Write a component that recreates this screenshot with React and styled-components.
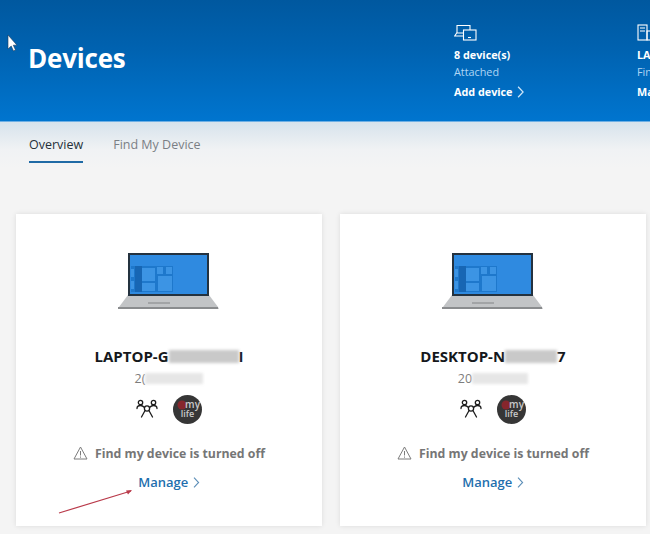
import React from "react";
import styled, { createGlobalStyle } from "styled-components";

const Global = createGlobalStyle`
  html, body { margin: 0; padding: 0; background: #f4f4f4; }
  body { font-family: "Open Sans", "Noto Sans", "Liberation Sans", sans-serif; }
`;

const Page = styled.div`
  position: relative;
  width: 650px;
  height: 534px;
  overflow: hidden;
  background: #f4f4f4;
`;

const Hero = styled.header`
  height: 122px;
  box-sizing: border-box;
  display: flex;
  background: linear-gradient(180deg, #00589f 0%, #0062b0 40%, #0075cf 100%);
  color: #fff;
  border-bottom: 1px solid #6fb0e4;
`;

const Title = styled.h1`
  margin: 0;
  width: 454px;
  flex: none;
  box-sizing: border-box;
  padding: 39px 0 0 28px;
  font-size: 26px;
  line-height: 38px;
  font-weight: 700;
  letter-spacing: -0.2px;
`;

const Stat = styled.div`
  width: 183px;
  flex: none;
  box-sizing: border-box;
  padding-top: 24px;
  white-space: nowrap;
`;

const StatValue = styled.div`
  margin-top: 6px;
  font-size: 10.8px;
  line-height: 16px;
  font-weight: 700;
`;

const StatLabel = styled.div`
  margin-top: 1px;
  font-size: 10.8px;
  line-height: 16px;
  color: #b0d6f4;
`;

const StatLink = styled.div`
  margin-top: 4px;
  font-size: 10.8px;
  line-height: 16px;
  font-weight: 700;
  display: flex;
  align-items: center;
  gap: 4px;
`;

const Tabs = styled.nav`
  height: 92px;
  box-sizing: border-box;
  padding: 12px 0 0 29px;
  display: flex;
  gap: 30px;
  background: linear-gradient(180deg, #d7e3ec 0%, #f0f2f4 30%, #f4f4f4 50%);
`;

const Tab = styled.div`
  height: 29px;
  box-sizing: border-box;
  font-size: 12.5px;
  line-height: 21px;
  color: ${(p) => (p.$active ? "#26303a" : "#7b7f85")};
  border-bottom: ${(p) => (p.$active ? "2px solid #1f6aa5" : "none")};
`;

const Cards = styled.main`
  display: flex;
  gap: 18px;
  padding-left: 16px;
`;

const Card = styled.section`
  width: 306px;
  height: 312px;
  flex: none;
  box-sizing: border-box;
  background: #fff;
  box-shadow: 0 0 5px rgba(0, 0, 0, 0.1);
  display: flex;
  flex-direction: column;
  align-items: center;
  padding-top: 38px;
`;

const DeviceName = styled.div`
  margin-top: 36px;
  height: 20px;
  display: flex;
  align-items: center;
  font-size: 15px;
  line-height: 20px;
  font-weight: 700;
  color: #15181c;
`;

const Redacted = styled.span`
  display: inline-block;
  width: ${(p) => p.$w}px;
  height: ${(p) => p.$h}px;
  background: ${(p) => p.$c};
  filter: blur(1.5px);
`;

const Serial = styled.div`
  margin-top: 3px;
  height: 18px;
  display: flex;
  align-items: center;
  font-size: 12.5px;
  color: #7d7d7d;
`;

const Owners = styled.div`
  margin-top: 7px;
  height: 30px;
  display: flex;
  align-items: center;
  gap: 15px;
`;

const Warning = styled.div`
  margin-top: 20px;
  height: 18px;
  display: flex;
  align-items: center;
  gap: 7px;
  font-size: 12.3px;
  font-weight: 700;
  color: #767676;
  white-space: nowrap;
`;

const Manage = styled.div`
  margin-top: 11px;
  display: flex;
  align-items: center;
  gap: 5px;
  font-size: 13px;
  line-height: 18px;
  font-weight: 600;
  color: #1f6fae;
`;

const Overlay = styled.svg`
  position: absolute;
  left: 0;
  top: 0;
  pointer-events: none;
`;

const Laptop = () => (
  <svg width="102" height="58" viewBox="0 0 102 58">
    <path d="M0 57 L1 55 L10 43 H91 L100 55 L101 57 Z" fill="#c2c4c6" />
    <rect x="0" y="55" width="100" height="2" fill="#8a8c8e" />
    <rect x="30" y="50" width="22" height="2" fill="#a2a4a6" />
    <rect x="10" y="1" width="81" height="43" fill="#24323f" />
    <rect x="12" y="3" width="77" height="39" fill="#2f8ae0" />
    <rect x="13" y="14" width="42" height="26" fill="#1e78cc" />
    <rect x="17" y="14" width="7" height="26" fill="#1766b4" />
    <g fill="#3c94e4">
      <rect x="13" y="17" width="3" height="8" />
      <rect x="13" y="29" width="3" height="8" />
      <rect x="24" y="16" width="13" height="13" />
      <rect x="24" y="31" width="13" height="8" />
      <rect x="39" y="15" width="6" height="7" />
      <rect x="48" y="15" width="6" height="7" />
      <rect x="40" y="24" width="14" height="15" />
    </g>
  </svg>
);

const Family = () => (
  <svg width="22" height="20" viewBox="0 0 22 20" fill="none" stroke="#1c1c1c" strokeWidth="1.3" strokeLinecap="round">
    <circle cx="4.500" cy="3.500" r="2.200" />
    <circle cx="17.500" cy="3.500" r="2.200" />
    <circle cx="11" cy="9.500" r="2.600" />
    <path d="M1 9.500c0-1.800 1.500-3 3.500-3 1.500 0 2.800.8 4 2" />
    <path d="M21 9.500c0-1.800-1.500-3-3.500-3-1.500 0-2.800.8-4 2" />
    <path d="M8.800 12 5.500 18M13.200 12l3.300 6" />
  </svg>
);

const Avatar = () => (
  <svg width="29" height="29" viewBox="0 0 29 29" fontFamily="'Open Sans', sans-serif" fontWeight="600" fill="#c9c9c9">
    <circle cx="14.500" cy="14.500" r="14.500" fill="#363636" />
    <circle cx="9" cy="10" r="4.500" fill="#86262c" />
    <text x="27" y="13" fontSize="10" textAnchor="end">my</text>
    <text x="14.500" y="22" fontSize="9" textAnchor="middle">life</text>
  </svg>
);

const WarnIcon = () => (
  <svg width="15" height="14" viewBox="0 0 15 14" fill="none" stroke="#7c7c7c" strokeWidth="1">
    <path d="M7.500 1 L14 13 H1 Z" strokeLinejoin="round" />
    <path d="M7.500 5v4.500M7.500 10.500v1.200" />
  </svg>
);

const Chevron = ({ color, size = 11 }) => (
  <svg width={size * 0.6} height={size} viewBox="0 0 6 11" fill="none" stroke={color} strokeWidth="1.100">
    <path d="M.7.7 5.300 5.500.7 10.300" />
  </svg>
);

const DevicesIcon = () => (
  <svg width="23" height="17" viewBox="0 0 23 17" fill="none" stroke="#fff" strokeWidth="1.100" style={{ display: "block" }}>
    <path d="M3 9V1.500h13V6" />
    <path d="M9 12H.7l2-3H9" />
    <rect x="9.500" y="6" width="12.500" height="10" />
    <path d="M14 13.500h3" />
  </svg>
);

const PhoneIcon = () => (
  <svg width="23" height="17" viewBox="0 0 23 17" fill="none" stroke="#fff" strokeWidth="1.100" style={{ display: "block" }}>
    <rect x="1" y="1" width="9" height="15" />
    <path d="M3 4h5M3 7h5" />
    <rect x="10" y="7" width="10" height="9" />
  </svg>
);

const DeviceCard = ({ prefix, w1, suffix, serial, w2 }) => (
  <Card>
    <Laptop />
    <DeviceName>
      {prefix}
      <Redacted $w={w1} $h={13} $c="#c9c9c9" />
      {suffix}
    </DeviceName>
    <Serial>
      {serial}
      <Redacted $w={w2} $h={11} $c="#e6e6e6" />
    </Serial>
    <Owners>
      <Family />
      <Avatar />
    </Owners>
    <Warning>
      <WarnIcon />
      Find my device is turned off
    </Warning>
    <Manage>
      Manage
      <Chevron color="#5d8fb8" />
    </Manage>
  </Card>
);

export default function App() {
  return (
    <Page>
      <Global />
      <Hero>
        <Title>Devices</Title>
        <Stat>
          <DevicesIcon />
          <StatValue>8 device(s)</StatValue>
          <StatLabel>Attached</StatLabel>
          <StatLink>
            Add device
            <Chevron color="#cfe6f8" size={12} />
          </StatLink>
        </Stat>
        <Stat>
          <PhoneIcon />
          <StatValue>LAPTOP</StatValue>
          <StatLabel>Find</StatLabel>
          <StatLink>Manage</StatLink>
        </Stat>
      </Hero>
      <Tabs>
        <Tab $active>Overview</Tab>
        <Tab>Find My Device</Tab>
      </Tabs>
      <Cards>
        <DeviceCard prefix="LAPTOP-G" w1={70} suffix="I" serial="2(" w2={58} />
        <DeviceCard prefix="DESKTOP-N" w1={52} suffix="7" serial="20" w2={56} />
      </Cards>
      <Overlay width="650" height="534" viewBox="0 0 650 534">
        <path d="M8 35v14l3.200-3 2.300 5 2-1-2.200-4.800H17Z" fill="#fff" stroke="#1b3a5c" strokeWidth=".6" />
        <path d="M59 513 L131 491" stroke="#b93a4a" strokeWidth="1.200" />
        <path d="M132 490 L126 490.500 L128 494.500 Z" fill="#b93a4a" />
      </Overlay>
    </Page>
  );
}
